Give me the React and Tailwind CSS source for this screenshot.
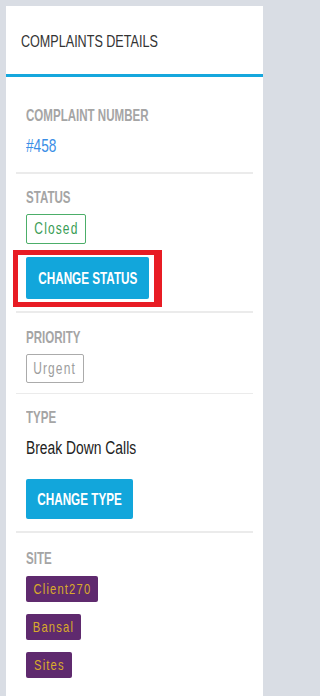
import React from 'react'

// Complaint detail side panel
// the reference is horizontally squeezed, so text is drawn in Liberation Sans and narrowed with scale-x
const sans = { fontFamily: '"Liberation Sans", Arial, sans-serif' }

function Label({ children }) {
  return (
    <div
      className="origin-left scale-x-[0.7] whitespace-nowrap text-[16.5px] leading-[20px] font-bold text-[#a5a5a5]"
      style={sans}
    >
      {children}
    </div>
  )
}

function Section({ children, className = '' }) {
  return <div className={`mx-[10px] px-[10px] border-[#ebebeb] ${className}`}>{children}</div>
}

function Squeezed({ children, className = '' }) {
  return (
    <span className={`shrink-0 inline-block whitespace-nowrap ${className}`} style={sans}>
      {children}
    </span>
  )
}

function BlueButton({ children, className = '' }) {
  return (
    <button
      className={`flex items-center justify-center overflow-visible rounded-[2px] bg-[#12a6db] text-white ${className}`}
    >
      <Squeezed className="scale-x-[0.71] text-[16.5px] font-bold">{children}</Squeezed>
    </button>
  )
}

function Badge({ children, className = '' }) {
  return (
    <span className={`flex items-center justify-center rounded-[2px] ${className}`}>
      <Squeezed className="scale-x-[0.75]">{children}</Squeezed>
    </span>
  )
}

const SITES = [
  { name: 'Client270', w: 'w-[72px]' },
  { name: 'Bansal', w: 'w-[55px]' },
  { name: 'Sites', w: 'w-[46px]' },
]

export default function App() {
  return (
    <div className="min-h-[696px] bg-[#d9dde4] pt-[6px] pl-[6px]">
      <div className="w-[257px] min-h-[690px] bg-white">
        {/* Header */}
        <div className="h-[71px] pl-[15px] pt-[26px] border-b-[3px] border-[#16a7dd]">
          <h1
            className="origin-left scale-x-[0.74] whitespace-nowrap text-[17px] leading-[20px] text-[#333]"
            style={sans}
          >
            COMPLAINTS DETAILS
          </h1>
        </div>

        {/* Complaint number */}
        <Section className="pt-[28px] pb-[14px] border-b-2">
          <Label>COMPLAINT NUMBER</Label>
          <div
            className="mt-[9px] origin-left scale-x-[0.72] text-[19px] leading-[24px] text-[#3a8ee6]"
            style={sans}
          >
            #458
          </div>
        </Section>

        {/* Status */}
        <Section className="pt-[13px] pb-[12px] border-b-2">
          <Label>STATUS</Label>
          <div className="mt-[7px] flex">
            <Badge className="w-[60px] h-[30px] border border-[#4cae69] text-[16px] tracking-[1.5px] text-[#3a9d56]">
              Closed
            </Badge>
          </div>
          <div className="mt-[13px] flex">
            <div className="relative">
              <BlueButton className="w-[123px] h-[42px]">CHANGE STATUS</BlueButton>
              <div className="absolute -left-[13px] -top-[7px] -right-[13px] -bottom-[8px] border-[5px] border-r-[8px] border-[#e81c24] pointer-events-none" />
            </div>
          </div>
        </Section>

        {/* Priority */}
        <Section className="pt-[14px] pb-[10px] border-b">
          <Label>PRIORITY</Label>
          <div className="mt-[7px] flex">
            <Badge className="w-[58px] h-[29px] border border-[#ababab] text-[16px] tracking-[1.5px] text-[#9d9d9d]">
              Urgent
            </Badge>
          </div>
        </Section>

        {/* Type */}
        <Section className="pt-[13px] pb-[12px] border-b-2">
          <Label>TYPE</Label>
          <div
            className="mt-[9px] origin-left scale-x-[0.77] whitespace-nowrap text-[18px] leading-[24px] text-[#222]"
            style={sans}
          >
            Break Down Calls
          </div>
          <BlueButton className="mt-[19px] w-[107px] h-[40px]">CHANGE TYPE</BlueButton>
        </Section>

        {/* Site */}
        <Section className="pt-[15px] pb-[16px]">
          <Label>SITE</Label>
          <div className="mt-[8px] flex flex-col items-start gap-[12px]">
            {SITES.map((s) => (
              <Badge
                key={s.name}
                className={`${s.w} h-[26px] bg-[#5f2a6e] text-[15px] tracking-[1.5px] text-[#d9aa2b]`}
              >
                {s.name}
              </Badge>
            ))}
          </div>
        </Section>
      </div>
    </div>
  )
}
